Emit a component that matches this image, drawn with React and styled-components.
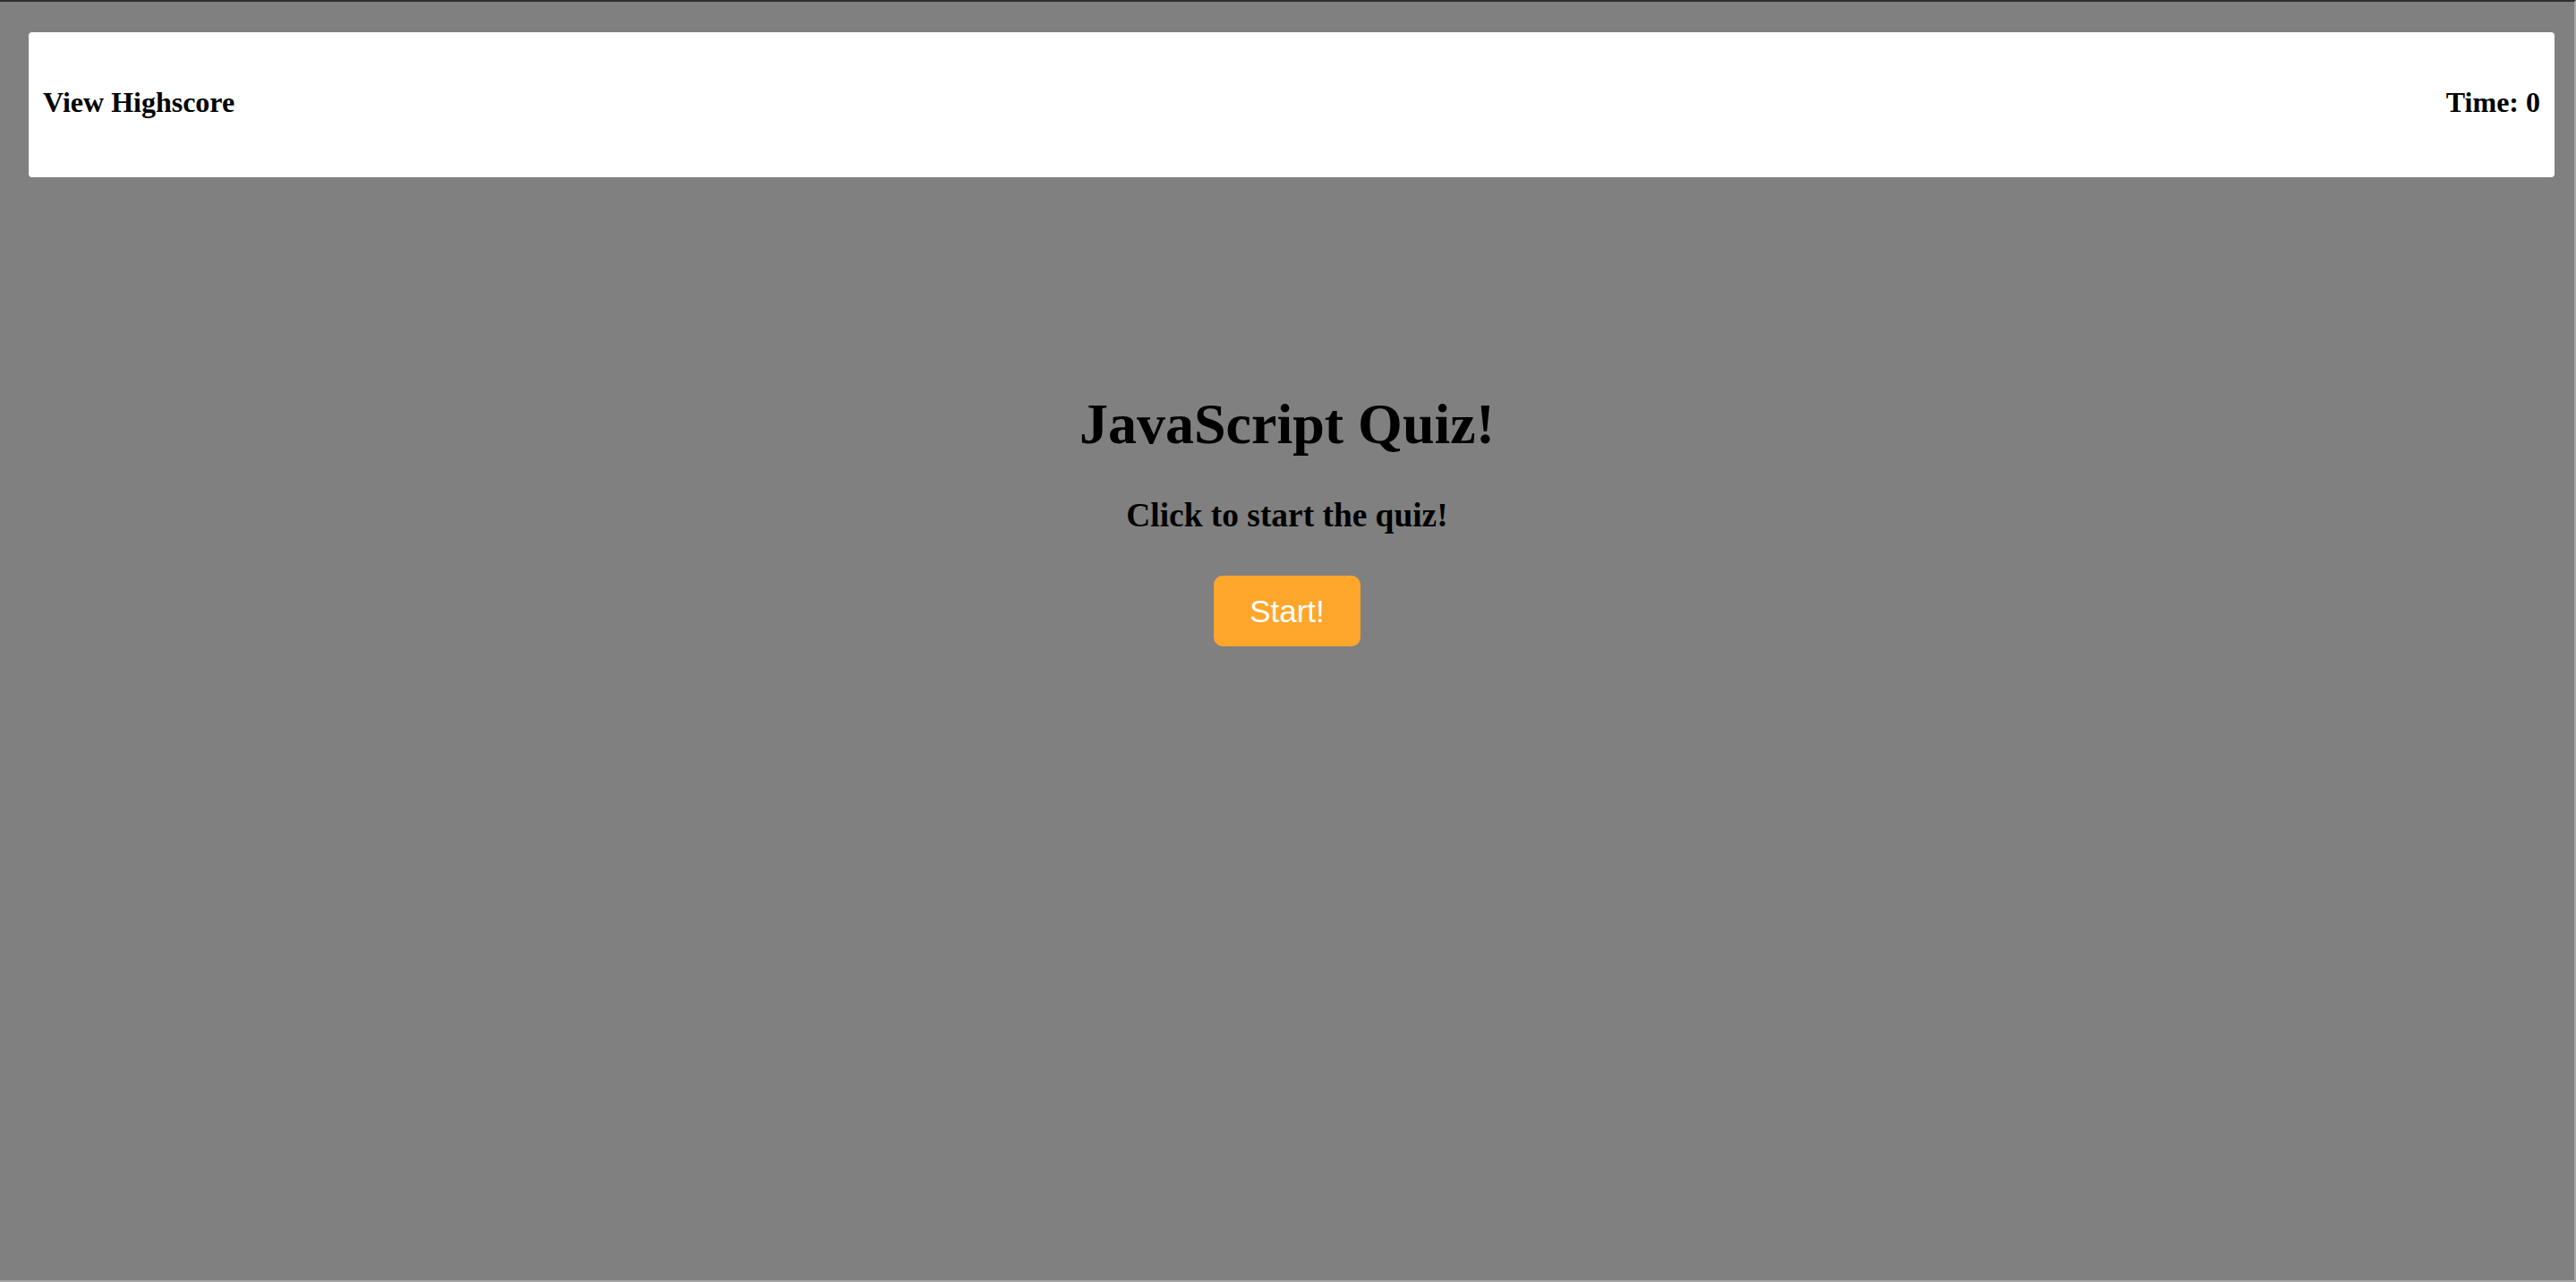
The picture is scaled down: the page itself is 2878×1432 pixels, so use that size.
import React from "react";
import styled, { createGlobalStyle } from "styled-components";

export default function App() {
  return (
    <>
      <GlobalStyle />
      <StyledFrame>
        <StyledHeader>
          <HeaderText>View Highscore</HeaderText>
          <HeaderText>Time: 0</HeaderText>
        </StyledHeader>
        <StyledMain>
          <Title>JavaScript Quiz!</Title>
          <SubTitle>Click to start the quiz!</SubTitle>
          <StartButton>Start!</StartButton>
        </StyledMain>
      </StyledFrame>
    </>
  );
}

// Styles
const GlobalStyle = createGlobalStyle`
  html, body {
    margin: 0;
    padding: 0;
    background: #808080;
  }
  * {
    box-sizing: border-box;
  }
`;

const StyledFrame = styled.div`
  min-height: 100vh;
  background: #808080;
  border-top: 2px solid #2e2e2e;
  border-right: 2px solid #a6a6a6;
  border-bottom: 2px solid #a6a6a6;
  font-family: "Liberation Serif", "Times New Roman", serif;
  color: #000;
`;

const StyledHeader = styled.header`
  display: flex;
  justify-content: space-between;
  align-items: center;
  height: 162px;
  margin: 34px 22px 0 32px;
  padding: 0 16px 5px;
  background: #ffffff;
  border-radius: 4px;
`;

const HeaderText = styled.h3`
  margin: 0;
  font-size: 32px;
  font-weight: bold;
`;

const StyledMain = styled.main`
  display: flex;
  flex-direction: column;
  align-items: center;
  padding-top: 239px;
`;

const Title = styled.h1`
  margin: 0 0 43px;
  font-size: 64px;
  font-weight: bold;
`;

const SubTitle = styled.h3`
  margin: 0 0 46px;
  font-size: 37.4px;
  font-weight: bold;
`;

const StartButton = styled.button`
  height: 79px;
  padding: 0 40px;
  border: none;
  border-radius: 10px;
  background: #ffa62b;
  color: #ffffff;
  font-family: "Liberation Sans", Arial, sans-serif;
  font-size: 35px;
  cursor: pointer;
`;
